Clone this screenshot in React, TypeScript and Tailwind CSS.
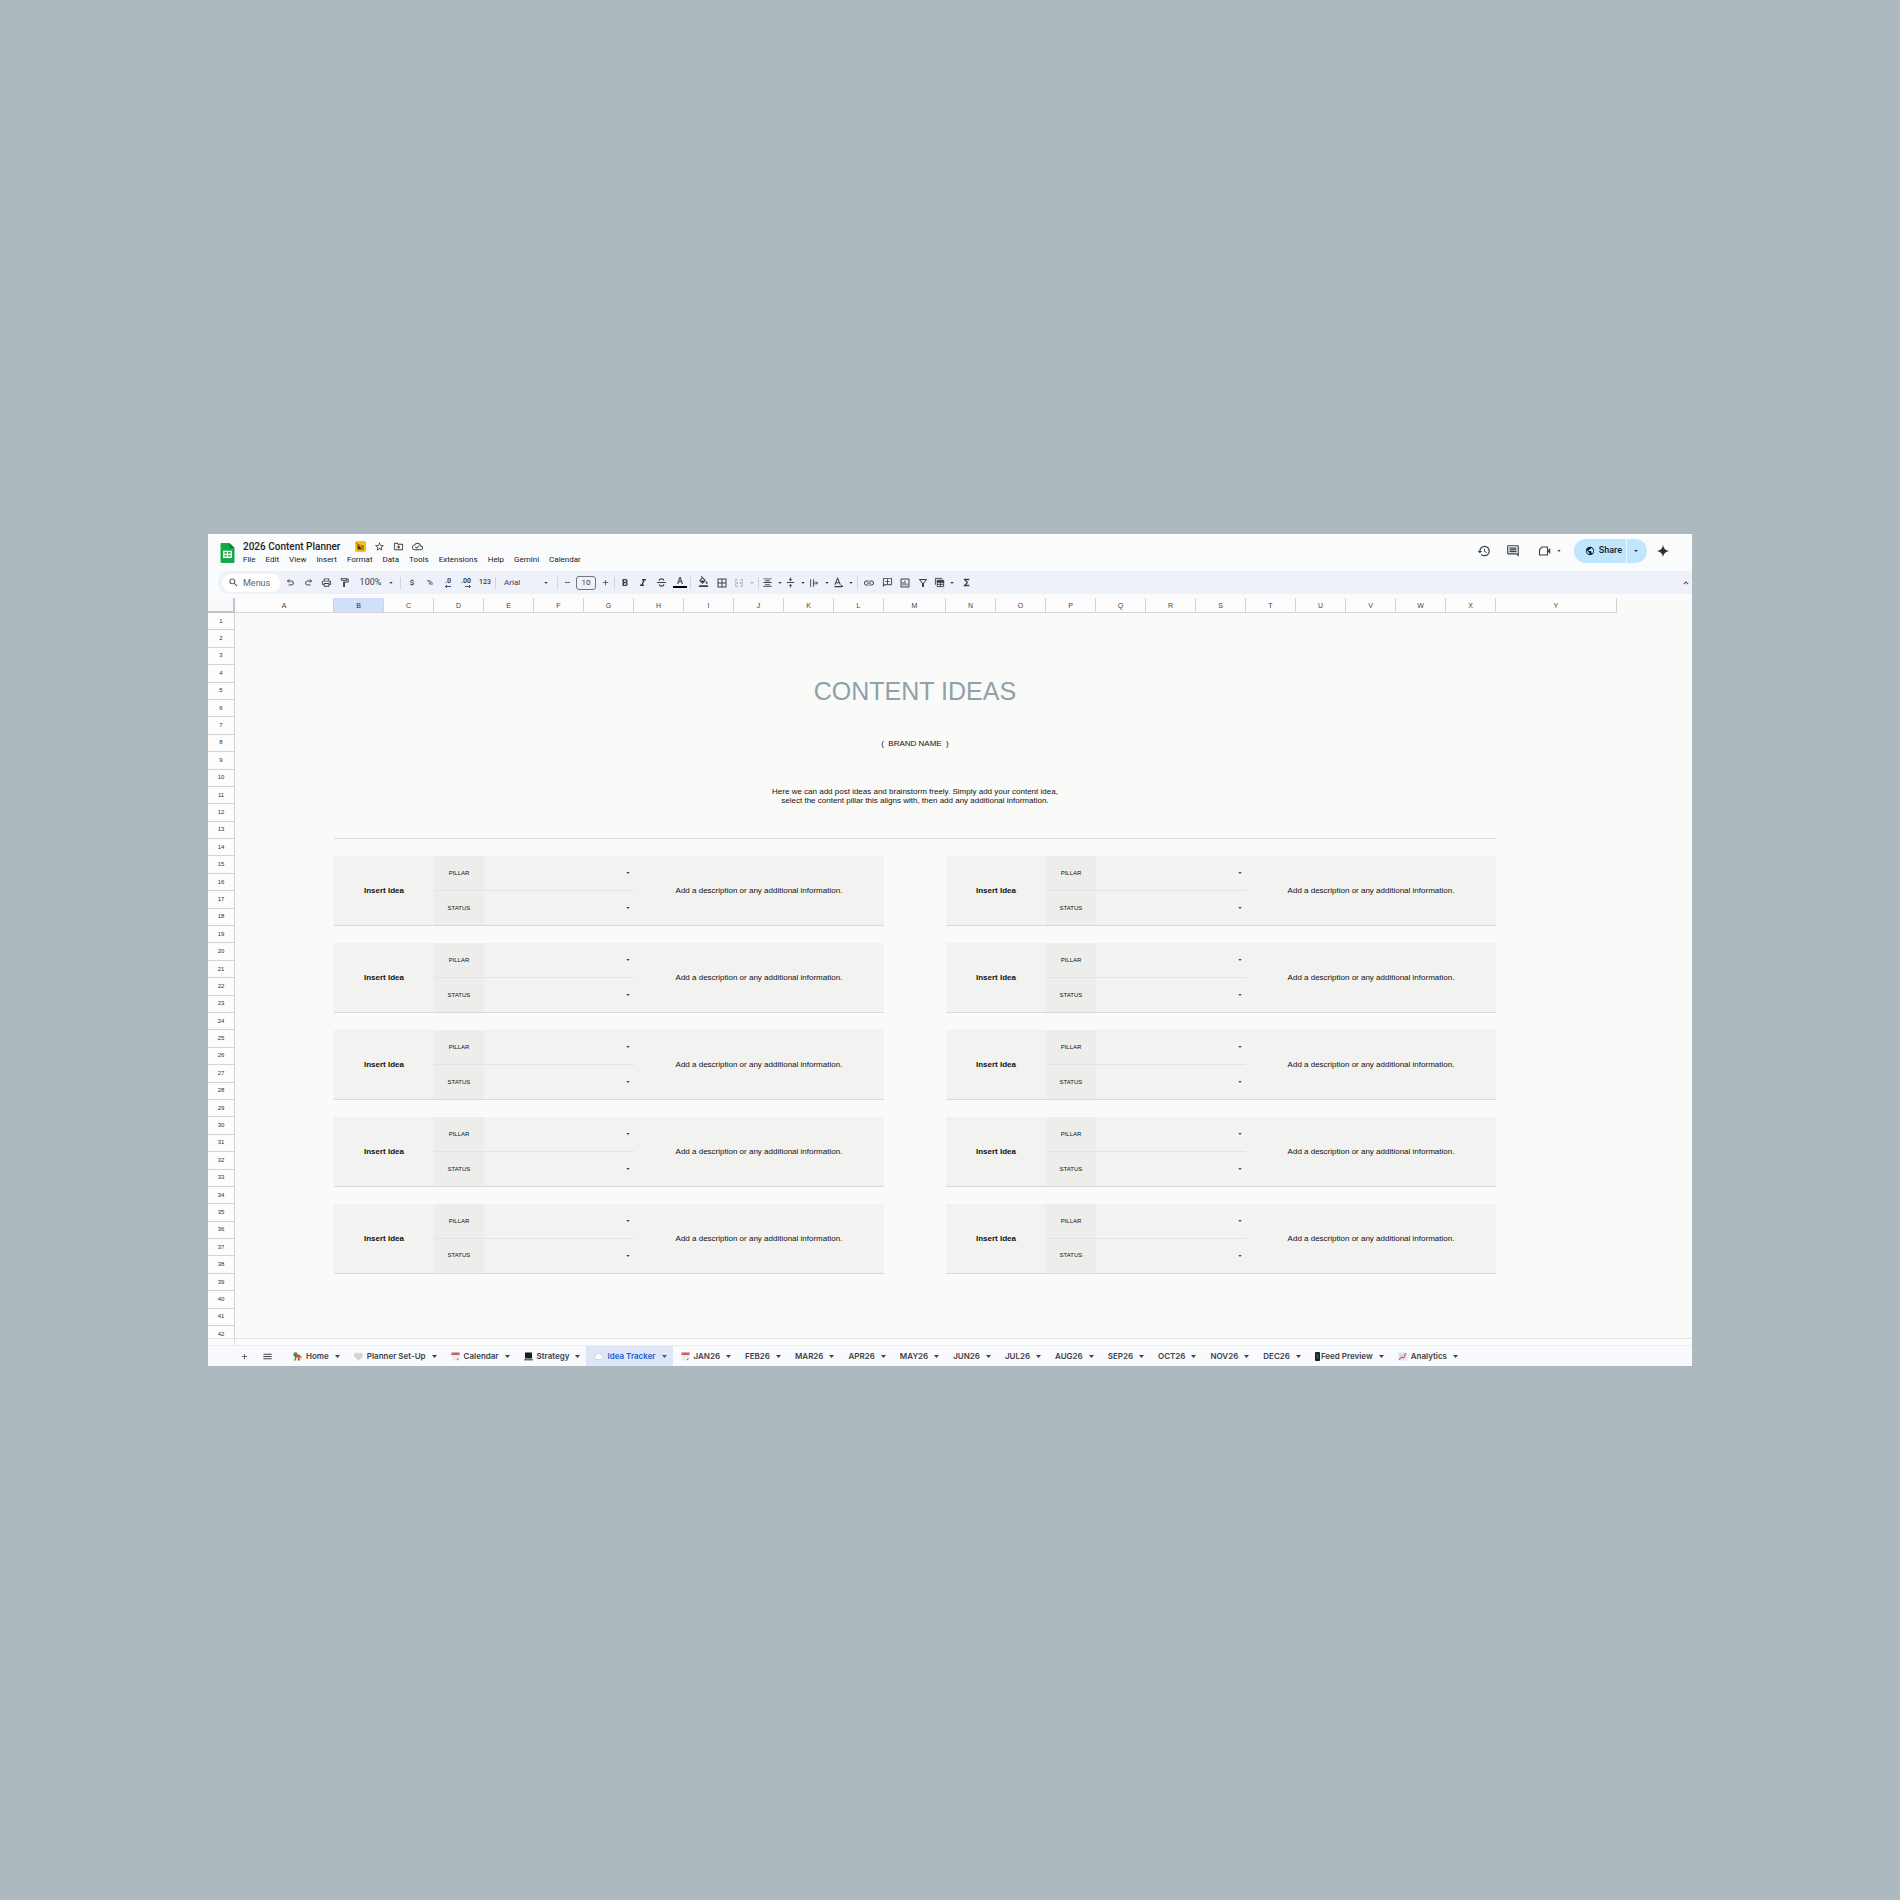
import React from "react";
import {
  MdAdd,
  MdBorderAll,
  MdExpandLess,
  MdFormatAlignCenter,
  MdFormatBold,
  MdFormatColorFill,
  MdFormatItalic,
  MdFormatStrikethrough,
  MdFunctions,
  MdHistory,
  MdLink,
  MdMenu,
  MdOutlineAddComment,
  MdOutlineCloudDone,
  MdOutlineComment,
  MdOutlineDriveFileMove,
  MdOutlineFilterAlt,
  MdOutlineFormatPaint,
  MdOutlineInsertChart,
  MdOutlinePrint,
  MdPublic,
  MdRemove,
  MdSearch,
  MdStarBorder,
  MdVerticalAlignCenter,
} from "react-icons/md";

const MENUS = [
  "File",
  "Edit",
  "View",
  "Insert",
  "Format",
  "Data",
  "Tools",
  "Extensions",
  "Help",
  "Gemini",
  "Calendar",
];

const COLUMNS = "ABCDEFGHIJKLMNOPQRSTUVWXY".split("");
const ROWS = Array.from({ length: 42 }, (_, i) => i + 1);
const CARD_ROWS = [15, 20, 25, 30, 35];

type EmojiName = "house" | "heart" | "calendar" | "laptop" | "cloud" | "phone" | "chart";

interface SheetTab {
  name: string;
  emoji?: EmojiName;
  active?: boolean;
}

const TABS: SheetTab[] = [
  { name: "Home", emoji: "house" },
  { name: "Planner Set-Up", emoji: "heart" },
  { name: "Calendar", emoji: "calendar" },
  { name: "Strategy", emoji: "laptop" },
  { name: "Idea Tracker", emoji: "cloud", active: true },
  { name: "JAN26", emoji: "calendar" },
  { name: "FEB26" },
  { name: "MAR26" },
  { name: "APR26" },
  { name: "MAY26" },
  { name: "JUN26" },
  { name: "JUL26" },
  { name: "AUG26" },
  { name: "SEP26" },
  { name: "OCT26" },
  { name: "NOV26" },
  { name: "DEC26" },
  { name: "Feed Preview", emoji: "phone" },
  { name: "Analytics", emoji: "chart" },
];

const Caret: React.FC<{ className?: string }> = ({ className = "h-[3px] w-[5px]" }) => (
  <svg viewBox="0 0 10 6" className={`shrink-0 ${className}`} fill="currentColor">
    <path d="M0 0h10L5 6z" />
  </svg>
);

const Divider = () => <span className="h-3 w-px shrink-0 bg-[#cdd2dc]" />;

const ToolButton: React.FC<{ label: string; className?: string; children: React.ReactNode }> = ({
  label,
  className = "w-[18px] justify-center",
  children,
}) => (
  <button
    type="button"
    aria-label={label}
    className={`flex h-[18px] shrink-0 items-center ${className}`}
  >
    {children}
  </button>
);

const SheetsLogo = () => (
  <svg viewBox="0 0 14 20" className="h-5 w-[15px] shrink-0">
    <path d="M1.3 0H9l5 5v13.7c0 .7-.6 1.3-1.3 1.3H1.3C.6 20 0 19.4 0 18.7V1.3C0 .6.6 0 1.3 0z" fill="#16a94a" />
    <path d="M9 0l5 5H9z" fill="#0b7f35" />
    <path
      d="M2.6 7.7h8.8v7.200H2.600zM4 9v1.700h2.300V9zm3.600 0v1.700H10V9zM4 11.900v1.700h2.300v-1.700zm3.600 0v1.700H10v-1.700z"
      fill="#fff"
      fillRule="evenodd"
    />
  </svg>
);

const BadgeIcon = () => (
  <svg viewBox="0 0 22 22" className="h-[11px] w-[11px] shrink-0">
    <rect width="22" height="22" rx="4" fill="#fbbc14" />
    <path d="M5 6h5v3h7v8H5z" fill="#3b3520" />
    <path d="M12 11h3M12 14h3" stroke="#fbbc14" strokeWidth="1.4" />
    <path d="M4 4l14 14" stroke="#fbbc14" strokeWidth="3.4" />
    <path d="M3.5 4.5l14 14" stroke="#3b3520" strokeWidth="1.6" />
  </svg>
);

const UndoIcon: React.FC<{ className?: string }> = ({ className = "" }) => (
  <svg
    viewBox="0 0 24 24"
    className={`h-[9px] w-[9px] ${className}`}
    fill="none"
    stroke="currentColor"
    strokeWidth="2.6"
  >
    <path d="M8.500 3.500L4 8l4.500 4.500M4 8h10.500a5 5 0 010 10.500H7" />
  </svg>
);

const DecimalIcon: React.FC<{ digits: string; right?: boolean }> = ({ digits, right }) => (
  <span className="flex flex-col items-end font-[Roboto] text-[7px] leading-[7px] font-bold">
    {digits}
    <svg viewBox="0 0 12 6" className="h-[3px] w-[6px]" fill="none" stroke="currentColor" strokeWidth="1.8">
      {right ? <path d="M0 3h11M8 0l3 3-3 3" /> : <path d="M12 3H1M4 0L1 3l3 3" />}
    </svg>
  </span>
);

const StrikeIcon = () => (
  <svg
    viewBox="0 0 24 24"
    className="h-[11px] w-[11px]"
    fill="none"
    stroke="currentColor"
    strokeWidth="2.4"
  >
    <path d="M2 12h20M17 8c-.5-3-2.500-4-5-4-3 0-5 1.500-5 4M7 16c.5 3 2.500 4 5 4 3 0 5-1.500 5-4" />
  </svg>
);

const MergeIcon = () => (
  <svg
    viewBox="0 0 24 24"
    className="h-[10px] w-[10px]"
    fill="none"
    stroke="currentColor"
    strokeWidth="2"
  >
    <path d="M9 4H4v5M15 4h5v5M9 20H4v-5M15 20h5v-5M2 12h7M7 9.500L9.500 12 7 14.500M22 12h-7M17 9.500L14.500 12l2.500 2.500" />
  </svg>
);

const OverflowIcon = () => (
  <svg
    viewBox="0 0 24 24"
    className="h-[10px] w-[10px]"
    fill="none"
    stroke="currentColor"
    strokeWidth="2.2"
  >
    <path d="M4 3v18M11 3v18M11 12h10M16.500 8l4 4-4 4" />
  </svg>
);

const RotateIcon = () => (
  <svg
    viewBox="0 0 24 24"
    className="h-[11px] w-[11px]"
    fill="none"
    stroke="currentColor"
    strokeWidth="2.2"
  >
    <path d="M4 17L10 3l6 14M6 12.500h8M3 21h17M18 17.500l3.500 3.500" />
  </svg>
);

const TableViewsIcon = () => (
  <svg
    viewBox="0 0 24 24"
    className="h-[11px] w-[11px]"
    fill="none"
    stroke="currentColor"
    strokeWidth="2"
  >
    <path d="M18 3H3v14M7 7h14v14H7zM7 11.500h14M7 16h14M14 11.500V21" />
    <path d="M7 8h14v3H7z" fill="currentColor" />
  </svg>
);

const MeetIcon = () => (
  <svg
    viewBox="0 0 26 24"
    className="h-3 w-[13px]"
    fill="none"
    stroke="currentColor"
    strokeWidth="2.2"
  >
    <path d="M8 4h11v16H3V9z" />
    <path d="M20 11l4-4v10l-4-4z" fill="currentColor" strokeWidth="1" />
  </svg>
);

const SparkleIcon = () => (
  <svg viewBox="0 0 24 24" className="h-3 w-3" fill="#303134">
    <path d="M12 0c1 7 5 11 12 12-7 1-11 5-12 12-1-7-5-11-12-12C7 11 11 7 12 0z" />
  </svg>
);

const Emoji: React.FC<{ name: EmojiName }> = ({ name }) => {
  if (name === "phone") {
    return (
      <svg viewBox="0 0 10 18" className="h-[9px] w-[5px] shrink-0">
        <rect width="10" height="18" rx="2" fill="#1d1f21" />
        <path d="M2 3h6v11H2z" fill="#33413b" />
      </svg>
    );
  }
  return (
    <svg viewBox="0 0 18 18" className="mr-[3px] h-[9px] w-[9px] shrink-0">
      {name === "house" && (
        <>
          <circle cx="5" cy="5" r="4.5" fill="#4c9a3a" />
          <path d="M4 5h2v11H4z" fill="#8a5a33" />
          <path d="M6 10h11v7H6z" fill="#f1dfb8" />
          <path d="M4 11l7.500-6.500L18 11z" fill="#b8472c" />
          <path d="M10 12h3v5h-3z" fill="#8b4a25" />
          <path d="M1 15h5v2H1z" fill="#6fae4e" />
        </>
      )}
      {name === "heart" && (
        <path d="M9 17C2 12 0 9 0 5.500 0 1 7 0 9 4.500 11 0 18 1 18 5.500 18 9 16 12 9 17z" fill="#d3d3d6" />
      )}
      {name === "calendar" && (
        <>
          <path d="M1 2h16v11l-4 4H1z" fill="#ededee" />
          <path d="M1 1h16v5H1z" fill="#b85451" />
          <path d="M1 3.500h16" stroke="#dba19e" />
          <path d="M17 12l-5 5v-2.500z" fill="#4b4d51" />
        </>
      )}
      {name === "laptop" && (
        <>
          <path d="M2 1h14v12H2z" fill="#17181a" />
          <path d="M0 14h18l-1 3H1z" fill="#6b6d70" />
          <path d="M3 12L15 3" stroke="#36383b" />
        </>
      )}
      {name === "cloud" && (
        <path
          d="M4 15C0 15 0 9 3.500 8c0-6 8-7 9.500-3C17.500 5.500 19 11 16 14c-1 1.200-3 1-4 1z"
          fill="#fff"
          stroke="#b4bccb"
        />
      )}
      {name === "chart" && (
        <>
          <path d="M1 1h16v16H1z" fill="#e3e9f2" />
          <path d="M1 6h16M1 11h16M6 1v16M11 1v16" stroke="#c3cedd" />
          <path d="M2 16l5-6 4 2 5-10" fill="none" stroke="#d2393c" strokeWidth="2" />
        </>
      )}
    </svg>
  );
};

const Header = () => (
  <header className="flex h-[37px] items-center bg-[#fafbfd] pr-[23px] pl-3">
    <SheetsLogo />
    <div className="ml-2 flex flex-1 flex-col">
      <div className="flex h-[14px] items-center text-[#3c4043]">
        <h1 className="font-[Roboto] text-[10px] leading-[14px] font-medium text-[#1f1f1f]">
          2026 Content Planner
        </h1>
        <span className="ml-[15px]">
          <BadgeIcon />
        </span>
        <button type="button" aria-label="Star" className="ml-2">
          <MdStarBorder className="h-[11px] w-[11px]" />
        </button>
        <button type="button" aria-label="Move" className="ml-2">
          <MdOutlineDriveFileMove className="h-[11px] w-[11px]" />
        </button>
        <button type="button" aria-label="Document status" className="ml-2">
          <MdOutlineCloudDone className="h-[11px] w-[11px]" />
        </button>
      </div>
      <nav className="flex gap-[10px] font-[Roboto] text-[8px] leading-3 text-[#202124]">
        {MENUS.map((menu) => (
          <button key={menu} type="button">
            {menu}
          </button>
        ))}
      </nav>
    </div>
    <div className="flex items-center pb-[3px] text-[#3c4043]">
      <button type="button" aria-label="Version history" className="mr-[15px]">
        <MdHistory className="h-[14px] w-[14px]" />
      </button>
      <button type="button" aria-label="Comments" className="mr-[18px]">
        <MdOutlineComment className="h-[14px] w-[14px]" />
      </button>
      <button type="button" aria-label="Meet" className="mr-[13px] flex items-center gap-[6px]">
        <MeetIcon />
        <Caret className="h-[2px] w-1" />
      </button>
      <div className="flex h-6 items-center overflow-hidden rounded-full bg-[#bfe6fd] text-[#0b1d33]">
        <button
          type="button"
          className="flex h-full items-center gap-1 border-r border-[#e6f5fe] pr-1 pl-[11px] font-[Roboto] text-[9px] font-medium"
        >
          <MdPublic className="h-[10px] w-[10px]" />
          Share
        </button>
        <button
          type="button"
          aria-label="Quick sharing actions"
          className="flex h-full w-5 items-center justify-center pr-[2px]"
        >
          <Caret className="h-[2px] w-1" />
        </button>
      </div>
      <button type="button" aria-label="Gemini assistant" className="ml-[10px]">
        <SparkleIcon />
      </button>
    </div>
  </header>
);

const Toolbar = () => (
  <div className="bg-[#fafbfd] pb-1 pl-[10px]">
    <div className="flex h-[23px] items-center rounded-l-full bg-[#eef1fa] pr-[1px] pl-1 text-[#3c4043]">
      <label className="flex h-[18px] w-[59px] shrink-0 items-center gap-1 rounded-full bg-white pl-[6px]">
        <MdSearch className="h-[11px] w-[11px] shrink-0" />
        <input
          type="text"
          aria-label="Search the menus"
          placeholder="Menus"
          className="w-8 bg-transparent font-[Roboto] text-[9px] leading-3 outline-none placeholder:text-[#5f6368]"
        />
      </label>
      <ToolButton label="Undo">
        <UndoIcon />
      </ToolButton>
      <ToolButton label="Redo">
        <UndoIcon className="-scale-x-100" />
      </ToolButton>
      <ToolButton label="Print">
        <MdOutlinePrint className="h-[11px] w-[11px]" />
      </ToolButton>
      <ToolButton label="Paint format">
        <MdOutlineFormatPaint className="h-[11px] w-[11px]" />
      </ToolButton>
      <ToolButton label="Zoom" className="w-[47px] justify-center gap-2 font-[Roboto] text-[9px]">
        100%
        <Caret className="h-[2px] w-1" />
      </ToolButton>
      <Divider />
      <ToolButton label="Currency" className="ml-[2px] w-[18px] justify-center font-[Roboto] text-[8px] font-medium">
        $
      </ToolButton>
      <ToolButton label="Percent" className="w-[18px] justify-center font-[Roboto] text-[8px] font-medium">
        %
      </ToolButton>
      <ToolButton label="Decrease decimals">
        <DecimalIcon digits=".0" />
      </ToolButton>
      <ToolButton label="Increase decimals">
        <DecimalIcon digits=".00" right />
      </ToolButton>
      <ToolButton label="More formats" className="w-5 justify-center font-[Roboto] text-[7px] font-medium">
        123
      </ToolButton>
      <Divider />
      <ToolButton label="Font" className="w-[61px] justify-between pr-[9px] pl-2 font-[Roboto] text-[8px]">
        Arial
        <Caret className="h-[2px] w-1" />
      </ToolButton>
      <Divider />
      <ToolButton label="Decrease font size">
        <MdRemove className="h-[9px] w-[9px]" />
      </ToolButton>
      <input
        type="text"
        aria-label="Font size"
        defaultValue="10"
        className="h-[14px] w-5 shrink-0 rounded-[3px] border border-[#747775] bg-transparent text-center font-[Roboto] text-[8px]"
      />
      <ToolButton label="Increase font size">
        <MdAdd className="h-[9px] w-[9px]" />
      </ToolButton>
      <Divider />
      <ToolButton label="Bold" className="ml-[1px] w-[18px] justify-center">
        <MdFormatBold className="h-3 w-3" />
      </ToolButton>
      <ToolButton label="Italic">
        <MdFormatItalic className="h-3 w-3" />
      </ToolButton>
      <ToolButton label="Strikethrough">
        <StrikeIcon />
      </ToolButton>
      <ToolButton label="Text colour" className="w-5 justify-center">
        <span className="w-[14px] border-b-2 border-black text-center font-[Roboto] text-[9px] leading-[9px] font-medium">
          A
        </span>
      </ToolButton>
      <Divider />
      <ToolButton label="Fill colour" className="ml-[2px] w-5 justify-center pb-[3px]">
        <MdFormatColorFill className="h-[11px] w-[11px]" />
      </ToolButton>
      <ToolButton label="Borders">
        <MdBorderAll className="h-3 w-3" />
      </ToolButton>
      <ToolButton label="Merge cells" className="w-[27px] justify-end gap-[6px] pr-1 text-[#a5a8ad]">
        <MergeIcon />
        <Caret className="h-[2px] w-1" />
      </ToolButton>
      <Divider />
      <ToolButton label="Horizontal align" className="w-[23px] justify-end gap-[5px]">
        <MdFormatAlignCenter className="h-[11px] w-[11px]" />
        <Caret className="h-[2px] w-1" />
      </ToolButton>
      <ToolButton label="Vertical align" className="w-[23px] justify-end gap-[5px]">
        <MdVerticalAlignCenter className="h-[11px] w-[11px]" />
        <Caret className="h-[2px] w-1" />
      </ToolButton>
      <ToolButton label="Text wrapping" className="w-6 justify-end gap-[6px]">
        <OverflowIcon />
        <Caret className="h-[2px] w-1" />
      </ToolButton>
      <ToolButton label="Text rotation" className="mr-1 w-6 justify-end gap-[5px]">
        <RotateIcon />
        <Caret className="h-[2px] w-1" />
      </ToolButton>
      <Divider />
      <ToolButton label="Insert link" className="ml-[2px] w-[18px] justify-center">
        <MdLink className="h-3 w-3" />
      </ToolButton>
      <ToolButton label="Insert comment">
        <MdOutlineAddComment className="h-[11px] w-[11px] -scale-x-100" />
      </ToolButton>
      <ToolButton label="Insert chart">
        <MdOutlineInsertChart className="h-3 w-3" />
      </ToolButton>
      <ToolButton label="Create a filter">
        <MdOutlineFilterAlt className="h-3 w-3" />
      </ToolButton>
      <ToolButton label="Table views" className="w-[22px] justify-end gap-[5px]">
        <TableViewsIcon />
        <Caret className="h-[2px] w-1" />
      </ToolButton>
      <ToolButton label="Functions" className="ml-[3px] w-[18px] justify-center">
        <MdFunctions className="h-[11px] w-[11px]" />
      </ToolButton>
      <button type="button" aria-label="Hide the menus" className="ml-auto">
        <MdExpandLess className="h-[10px] w-[10px]" />
      </button>
    </div>
  </div>
);

const HEADER_CELL = "border-r border-b border-[#d3d3d3] p-0 leading-[7px] font-medium";
const CARD_CELL = "bg-[#f2f2f0] p-0 text-center text-[8px] leading-[9px]";

const FieldCells: React.FC<{ id: string; label: string; border: string }> = ({
  id,
  label,
  border,
}) => (
  <>
    <td rowSpan={2} className={`border-b bg-[#ededeb] p-0 text-center text-[6px] leading-[9px] ${border}`}>
      <label htmlFor={id}>{label}</label>
    </td>
    <td rowSpan={2} colSpan={3} className={`border-b bg-[#f2f2f0] p-0 ${border}`}>
      <span className="flex items-center pr-1 text-[#4a443c]">
        <select id={id} className="h-4 min-w-0 flex-1 appearance-none bg-transparent text-[7px] outline-none">
          <option value="" />
        </select>
        <Caret className="h-[2px] w-1" />
      </span>
    </td>
  </>
);

const CardTop: React.FC<{ id: string }> = ({ id }) => (
  <>
    <td rowSpan={4} colSpan={2} className={`border-b border-[#d9d9d8] font-bold ${CARD_CELL}`}>
      Insert Idea
    </td>
    <FieldCells id={`${id}-pillar`} label="PILLAR" border="border-[#e3e3e2]" />
    <td rowSpan={4} colSpan={5} className={`border-b border-[#d9d9d8] ${CARD_CELL}`}>
      Add a description or any additional information.
    </td>
  </>
);

const SheetRow: React.FC<{ row: number }> = ({ row }) => {
  if (row === 4) {
    return (
      <>
        <td />
        <td rowSpan={3} colSpan={23} className="p-0 text-center text-[25px] leading-7 text-[#8fa1aa]">
          CONTENT IDEAS
        </td>
      </>
    );
  }
  if (row === 8) {
    return (
      <>
        <td />
        <td colSpan={23} className="p-0 text-center text-[8px] leading-[9px] whitespace-pre">
          {"(  BRAND NAME  )"}
        </td>
      </>
    );
  }
  if (row === 10) {
    return (
      <>
        <td />
        <td rowSpan={3} colSpan={23} className="p-0 text-center text-[8px] leading-[9px]">
          Here we can add post ideas and brainstorm freely. Simply add your content idea,
          <br />
          select the content pillar this aligns with, then add any additional information.
        </td>
      </>
    );
  }
  if (row === 13) {
    return (
      <>
        <td />
        <td colSpan={23} className="border-b border-[#dededc] p-0" />
      </>
    );
  }
  if (CARD_ROWS.includes(row)) {
    return (
      <>
        <td rowSpan={4} />
        <CardTop id={`left-${row}`} />
        <td rowSpan={4} />
        <CardTop id={`right-${row}`} />
      </>
    );
  }
  if (CARD_ROWS.includes(row - 2)) {
    return (
      <>
        <FieldCells id={`left-${row}-status`} label="STATUS" border="border-[#d9d9d8]" />
        <FieldCells id={`right-${row}-status`} label="STATUS" border="border-[#d9d9d8]" />
      </>
    );
  }
  return null;
};

const Sheet = () => (
  <div className="h-[740px] overflow-hidden bg-[#fafaf8]">
    <table className="h-[746px] w-full table-fixed border-separate border-spacing-0 font-['Liberation_Sans',Arial,sans-serif] text-[#111]">
      <colgroup>
        <col className="w-[27px]" />
        <col className="w-[6.67%]" />
        {COLUMNS.slice(1, 12).map((c) => (
          <col key={c} className="w-[3.37%]" />
        ))}
        <col className="w-[4.18%]" />
        {COLUMNS.slice(13, 24).map((c) => (
          <col key={c} className="w-[3.37%]" />
        ))}
        <col className="w-[8.15%]" />
        <col />
      </colgroup>
      <thead>
        <tr className="h-[15px]">
          <th aria-label="Select all" className="border-r-2 border-b-2 border-[#c4c4c4] bg-[#f8f9fa] p-0" />
          {COLUMNS.map((c) => (
            <th
              key={c}
              scope="col"
              className={`text-[7px] ${HEADER_CELL} ${
                c === "B" ? "bg-[#d0e0fb] text-[#0b2a5b]" : "bg-[#fdfdfd] text-[#3f4144]"
              }`}
            >
              {c}
            </th>
          ))}
          <td />
        </tr>
      </thead>
      <tbody>
        {ROWS.map((row) => (
          <tr key={row} className="h-[17px]">
            <th scope="row" className={`bg-[#fdfdfd] text-[6px] text-[#2f3133] ${HEADER_CELL}`}>
              {row}
            </th>
            <SheetRow row={row} />
          </tr>
        ))}
      </tbody>
    </table>
  </div>
);

const TabBar = () => (
  <footer className="flex h-[21px] items-stretch border-t border-[#ececee] bg-[#f9fafd] pl-8 text-[#3f4246]">
    <button type="button" aria-label="Add sheet" className="w-2">
      <MdAdd className="h-[9px] w-[9px]" />
    </button>
    <button type="button" aria-label="All sheets" className="mr-3 ml-[14px]">
      <MdMenu className="h-[11px] w-[11px]" />
    </button>
    {TABS.map((tab) => (
      <button
        key={tab.name}
        type="button"
        className={`flex items-center pr-[6px] font-[Inter] text-[8px] leading-3 font-semibold ${
          tab.emoji ? "pl-2" : "pl-[7px]"
        } ${tab.active ? "bg-[#dfe6f8] text-[#1a5fd0]" : ""}`}
      >
        {tab.emoji && <Emoji name={tab.emoji} />}
        <span className="mr-[6px] ml-[1px]">{tab.name}</span>
        <Caret />
      </button>
    ))}
  </footer>
);

export default function App() {
  return (
    <main className="flex min-h-screen flex-col justify-center bg-[#aeb8bf] px-52">
      <div className="overflow-hidden">
        <Header />
        <Toolbar />
        <Sheet />
        <div className="h-[7px] border-t border-[#e2e2e2] bg-[#fcfcfc]">
          <div className="h-full w-[27px] border-r border-[#dcdcdc]" />
        </div>
        <TabBar />
      </div>
    </main>
  );
}
